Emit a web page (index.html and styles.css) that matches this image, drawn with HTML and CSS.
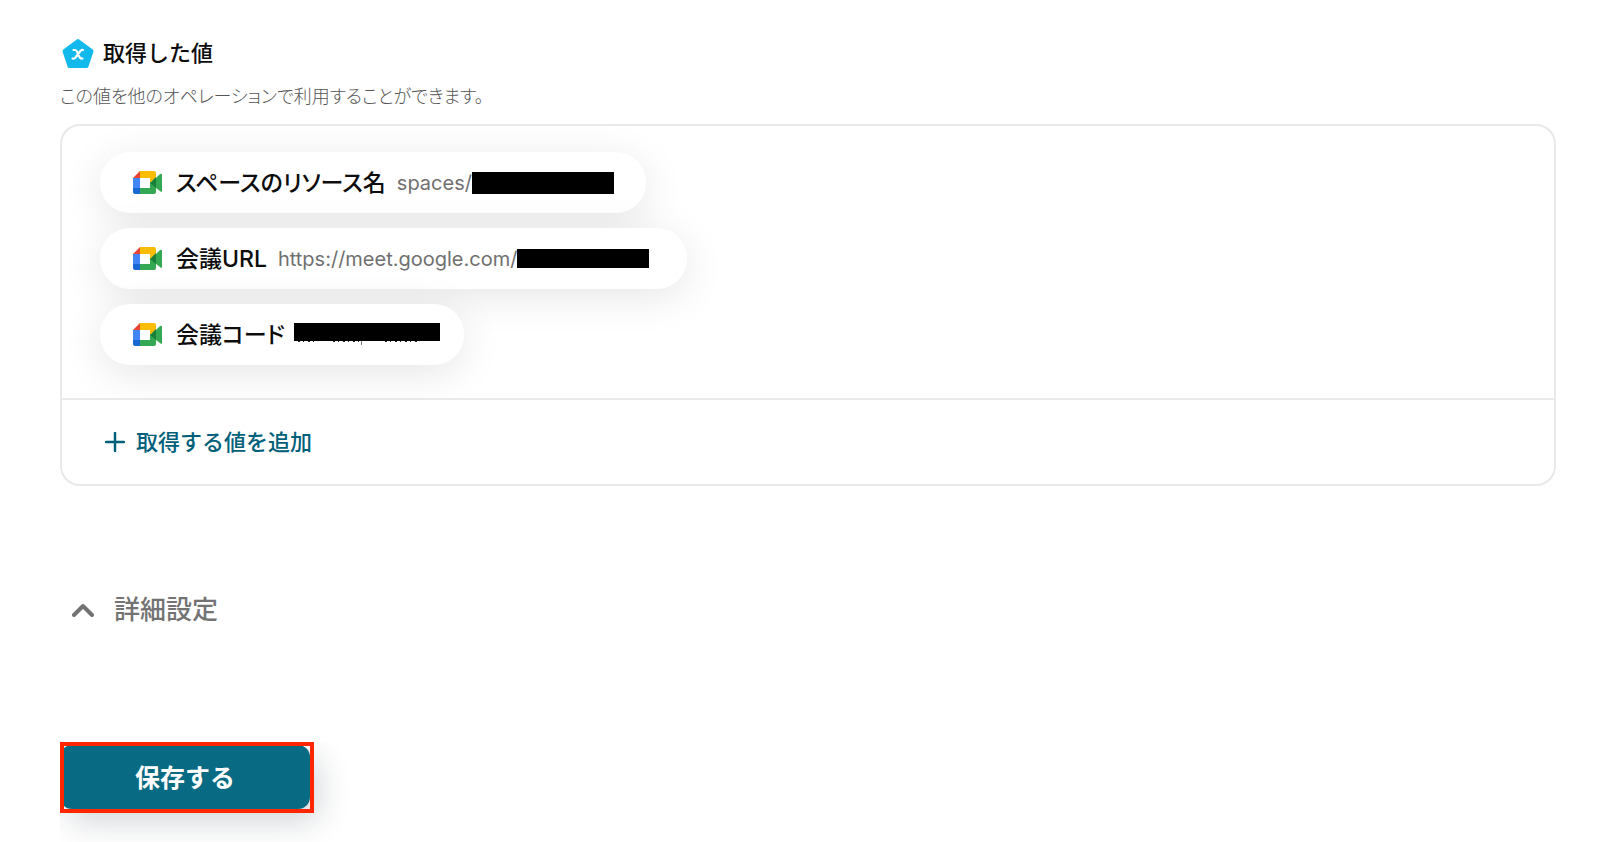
FILE: index.html
```html
<!DOCTYPE html>
<html lang="ja">

<head>
    <meta charset="utf-8">
    <title>取得した値</title>
    <meta name="viewport" content="width=device-width, initial-scale=1">
    <link rel="stylesheet" href="styles.css">
</head>

<body>

    <!-- Google Meet logo, shared by every value -->
    <svg class="symbols" aria-hidden="true">
        <symbol id="meet" viewBox="0 0 29 23">
            <path fill="#ea4335" d="M0 7 L7 0 V7 Z" />
            <path fill="#4285f4" d="M0 7 H7 V17 H0 Z" />
            <path fill="#1967d2" d="M0 17 H7 V23 H2 Q0 23 0 21 Z" />
            <path fill="#fbbc04" d="M7 0 H21 Q23 0 23 2 V7 L17 12 V7 H7 Z" />
            <path fill="#34a853" d="M7 17 H17 V11 L23 16 V21 Q23 23 21 23 H7 Z" />
            <path fill="#34a853" d="M23 7 L27 3 Q29 2 29 4 V20 Q29 22 27 20 L23 17 Z" />
            <path fill="#188038" d="M17 12 L23 6 V17 Z" />
        </symbol>
    </svg>

    <main class="page">
        <section class="outputs">
            <h1 class="title">
                <svg class="title-icon" viewBox="0 0 32 32" aria-hidden="true">
                    <path fill="#12b9ec" stroke="#12b9ec" stroke-width="4" stroke-linejoin="round" d="M16 4 L29.500 14 L24.500 29 H7.500 L2.500 14 Z" />
                    <path fill="none" stroke="#fff" stroke-width="2.200" stroke-linecap="round" stroke-linejoin="round" d="M11.500 13 H13 Q14 13 15 14.500 L17.500 20 Q18.500 22 20.500 21.500 M21 13 Q19.500 12.500 18 14.500 L13.500 20.500 Q12.500 22 10.500 21.500" />
                </svg>
                取得した値
            </h1>
            <p class="description">この値を他のオペレーションで利用することができます。</p>

            <div class="card">
                <ul class="values">
                    <li class="value">
                        <svg class="meet-icon" aria-hidden="true"><use href="#meet" /></svg>
                        <span class="value-name">スペースのリソース名</span>
                        <span class="value-text">spaces/<span class="mask mask-space"></span></span>
                    </li>
                    <li class="value">
                        <svg class="meet-icon" aria-hidden="true"><use href="#meet" /></svg>
                        <span class="value-name">会議URL</span>
                        <span class="value-text">https://meet.google.com/<span class="mask mask-url"></span></span>
                    </li>
                    <li class="value value-code">
                        <svg class="meet-icon" aria-hidden="true"><use href="#meet" /></svg>
                        <span class="value-name">会議コード</span>
                        <svg class="mask-code" viewBox="0 0 146 24" aria-hidden="true">
                            <path d="M0 0 H146 V18 H0 Z" />
                            <path stroke="#222" stroke-width="1" stroke-dasharray="2 3 1 4" d="M4 18.500 H24 M39 18.500 H66 M91 18.500 H124" />
                            <path fill="#777" d="M67 18 H68 V22 H67 Z" />
                        </svg>
                    </li>
                </ul>
                <div class="card-footer">
                    <button type="button" class="add-button">
                        <svg class="plus-icon" viewBox="0 0 20 20" aria-hidden="true">
                            <path d="M10 1 V19 M1 10 H19" />
                        </svg>
                        取得する値を追加
                    </button>
                </div>
            </div>
        </section>

        <button type="button" class="details-button">
            <svg class="chevron-icon" viewBox="0 0 22 14" aria-hidden="true">
                <path d="M2 12 L11 3 L20 12" />
            </svg>
            詳細設定
        </button>

        <div class="actions">
            <button type="submit" class="save-button">保存する</button>
        </div>
    </main>

</body>

</html>
```
FILE: styles.css
```css
* {
    margin: 0;
    padding: 0;
    box-sizing: border-box;
}

body {
    font-family: "Inter", "Noto Sans CJK JP", sans-serif;
    font-size: 22px;
    color: #0d0d0d;
    background-color: #fff;
}

button {
    font-family: inherit;
    font-weight: 500;
    border: 0;
    background: none;
    cursor: pointer;
}

.symbols {
    position: absolute;
    width: 0;
    height: 0;
}

.page {
    padding: 36px 44px 0 60px;
}

/** Heading **/
.title {
    display: flex;
    align-items: center;
    gap: 9px;
    padding-left: 2px;
    font-size: 22px;
    font-weight: 500;
    line-height: 34px;
}

.title-icon {
    width: 32px;
    height: 32px;
}

.description {
    margin: 13px 0;
    font-size: 18px;
    font-weight: 300;
    font-feature-settings: "palt";
    line-height: 28px;
    color: #555;
}

/** Card with the list of values **/
.card {
    border: 2px solid #e9e9e9;
    border-radius: 20px;
    overflow: hidden;
}

.values {
    display: flex;
    flex-direction: column;
    align-items: flex-start;
    gap: 15px;
    padding: 26px 38px 33px;
    overflow: hidden;
    list-style: none;
}

.value {
    display: flex;
    align-items: center;
    height: 61px;
    padding: 0 32px 0 33px;
    border-radius: 30px;
    background-color: #fff;
    box-shadow: 0 8px 40px rgba(0, 0, 0, 0.1);
}

.value-code {
    padding-right: 24px;
}

.meet-icon {
    width: 29px;
    height: 23px;
    margin-right: 14px;
}

.value-name {
    font-size: 23px;
    font-weight: 500;
    font-feature-settings: "palt";
    line-height: 34px;
}

.value-text {
    display: flex;
    align-items: center;
    margin-left: 11px;
    font-size: 20px;
    line-height: 30px;
    color: #707070;
}

/** Hidden parts of the values **/
.mask {
    background-color: #000;
}

.mask-space {
    width: 142px;
    height: 22px;
}

.mask-url {
    width: 132px;
    height: 19px;
    margin-right: 6px;
}

.mask-code {
    width: 146px;
    height: 24px;
    margin-left: 9px;
}

.card-footer {
    padding: 24px 43px;
    border-top: 2px solid #e9e9e9;
}

.add-button {
    display: flex;
    align-items: center;
    gap: 11px;
    font-size: 22px;
    line-height: 36px;
    color: #00607a;
}

.plus-icon {
    width: 20px;
    height: 20px;
    fill: none;
    stroke: currentColor;
    stroke-width: 2.5;
    stroke-linecap: round;
}

/** Collapsible settings **/
.details-button {
    display: flex;
    align-items: center;
    gap: 20px;
    margin-top: 104px;
    padding-left: 12px;
    font-size: 26px;
    line-height: 40px;
    color: #737373;
}

.chevron-icon {
    width: 22px;
    height: 14px;
    fill: none;
    stroke: currentColor;
    stroke-width: 4;
    stroke-linecap: round;
    stroke-linejoin: round;
}

/** Save button **/
.actions {
    margin-top: 112px;
    padding: 3px 0 33px;
    overflow: hidden;
}

.save-button {
    position: relative;
    display: block;
    width: 250px;
    height: 64px;
    padding-bottom: 2px;
    border-radius: 12px;
    font-size: 25px;
    font-weight: 600;
    color: #fff;
    background-color: #086a83;
    box-shadow: 8px 12px 32px rgba(20, 35, 50, 0.2);
}

.save-button::after {
    content: "";
    position: absolute;
    top: -3px;
    right: -4px;
    bottom: -4px;
    left: 0;
    border: 4px solid #ff2600;
}
```
